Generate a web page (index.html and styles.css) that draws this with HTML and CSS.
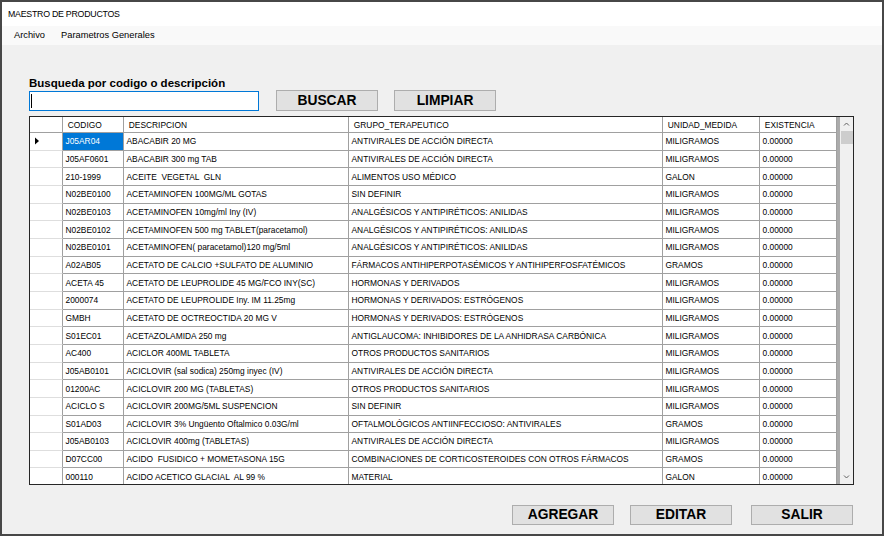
FILE: index.html
```html
<!DOCTYPE html>
<html lang="es">
<head>
<meta charset="utf-8">
<title>MAESTRO DE PRODUCTOS</title>
<link rel="stylesheet" href="styles.css">
</head>
<body>
<div class="window">
  <div class="titlebar">MAESTRO DE PRODUCTOS</div>
  <div class="menubar"><span>Archivo</span><span>Parametros Generales</span></div>
  <div class="main">
    <div class="search-label">Busqueda por codigo o descripción</div>
    <div class="search-row">
      <div class="textbox"><span class="caret"></span></div>
      <button class="btn btn-buscar">BUSCAR</button>
      <button class="btn btn-limpiar">LIMPIAR</button>
    </div>
    <div class="grid">
      <div class="table">
        <div class="row head">
          <div class="c0"></div><div class="c1">CODIGO</div><div class="c2">DESCRIPCION</div><div class="c3">GRUPO_TERAPEUTICO</div><div class="c4">UNIDAD_MEDIDA</div><div class="c5">EXISTENCIA</div>
        </div>
        <div class="row"><div class="c0"><svg class="arrow" width="5" height="8" viewBox="0 0 5 8"><polygon points="0,0.5 4,4 0,7.5" fill="#000"/></svg></div><div class="c1 sel">J05AR04</div><div class="c2">ABACABIR 20 MG</div><div class="c3">ANTIVIRALES DE ACCIÓN DIRECTA</div><div class="c4">MILIGRAMOS</div><div class="c5">0.00000</div></div>
        <div class="row"><div class="c0"></div><div class="c1">J05AF0601</div><div class="c2">ABACABIR 300 mg TAB</div><div class="c3">ANTIVIRALES DE ACCIÓN DIRECTA</div><div class="c4">MILIGRAMOS</div><div class="c5">0.00000</div></div>
        <div class="row"><div class="c0"></div><div class="c1">210-1999</div><div class="c2">ACEITE  VEGETAL  GLN</div><div class="c3">ALIMENTOS USO MÉDICO</div><div class="c4">GALON</div><div class="c5">0.00000</div></div>
        <div class="row"><div class="c0"></div><div class="c1">N02BE0100</div><div class="c2">ACETAMINOFEN 100MG/ML GOTAS</div><div class="c3">SIN DEFINIR</div><div class="c4">MILIGRAMOS</div><div class="c5">0.00000</div></div>
        <div class="row"><div class="c0"></div><div class="c1">N02BE0103</div><div class="c2">ACETAMINOFEN 10mg/ml Iny (IV)</div><div class="c3">ANALGÉSICOS Y ANTIPIRÉTICOS: ANILIDAS</div><div class="c4">MILIGRAMOS</div><div class="c5">0.00000</div></div>
        <div class="row"><div class="c0"></div><div class="c1">N02BE0102</div><div class="c2">ACETAMINOFEN 500 mg TABLET(paracetamol)</div><div class="c3">ANALGÉSICOS Y ANTIPIRÉTICOS: ANILIDAS</div><div class="c4">MILIGRAMOS</div><div class="c5">0.00000</div></div>
        <div class="row"><div class="c0"></div><div class="c1">N02BE0101</div><div class="c2">ACETAMINOFEN( paracetamol)120 mg/5ml</div><div class="c3">ANALGÉSICOS Y ANTIPIRÉTICOS: ANILIDAS</div><div class="c4">MILIGRAMOS</div><div class="c5">0.00000</div></div>
        <div class="row"><div class="c0"></div><div class="c1">A02AB05</div><div class="c2">ACETATO DE CALCIO +SULFATO DE ALUMINIO</div><div class="c3">FÁRMACOS ANTIHIPERPOTASÉMICOS Y ANTIHIPERFOSFATÉMICOS</div><div class="c4">GRAMOS</div><div class="c5">0.00000</div></div>
        <div class="row"><div class="c0"></div><div class="c1">ACETA 45</div><div class="c2">ACETATO DE LEUPROLIDE 45 MG/FCO INY(SC)</div><div class="c3">HORMONAS Y DERIVADOS</div><div class="c4">MILIGRAMOS</div><div class="c5">0.00000</div></div>
        <div class="row"><div class="c0"></div><div class="c1">2000074</div><div class="c2">ACETATO DE LEUPROLIDE Iny. IM 11.25mg</div><div class="c3">HORMONAS Y DERIVADOS: ESTRÓGENOS</div><div class="c4">MILIGRAMOS</div><div class="c5">0.00000</div></div>
        <div class="row"><div class="c0"></div><div class="c1">GMBH</div><div class="c2">ACETATO DE OCTREOCTIDA 20 MG V</div><div class="c3">HORMONAS Y DERIVADOS: ESTRÓGENOS</div><div class="c4">MILIGRAMOS</div><div class="c5">0.00000</div></div>
        <div class="row"><div class="c0"></div><div class="c1">S01EC01</div><div class="c2">ACETAZOLAMIDA 250 mg</div><div class="c3">ANTIGLAUCOMA: INHIBIDORES DE LA ANHIDRASA CARBÓNICA</div><div class="c4">MILIGRAMOS</div><div class="c5">0.00000</div></div>
        <div class="row"><div class="c0"></div><div class="c1">AC400</div><div class="c2">ACICLOR 400ML TABLETA</div><div class="c3">OTROS PRODUCTOS SANITARIOS</div><div class="c4">MILIGRAMOS</div><div class="c5">0.00000</div></div>
        <div class="row"><div class="c0"></div><div class="c1">J05AB0101</div><div class="c2">ACICLOVIR (sal sodica) 250mg inyec (IV)</div><div class="c3">ANTIVIRALES DE ACCIÓN DIRECTA</div><div class="c4">MILIGRAMOS</div><div class="c5">0.00000</div></div>
        <div class="row"><div class="c0"></div><div class="c1">01200AC</div><div class="c2">ACICLOVIR 200 MG (TABLETAS)</div><div class="c3">OTROS PRODUCTOS SANITARIOS</div><div class="c4">MILIGRAMOS</div><div class="c5">0.00000</div></div>
        <div class="row"><div class="c0"></div><div class="c1">ACICLO S</div><div class="c2">ACICLOVIR 200MG/5ML SUSPENCION</div><div class="c3">SIN DEFINIR</div><div class="c4">MILIGRAMOS</div><div class="c5">0.00000</div></div>
        <div class="row"><div class="c0"></div><div class="c1">S01AD03</div><div class="c2">ACICLOVIR 3% Ungüento Oftalmico 0.03G/ml</div><div class="c3">OFTALMOLÓGICOS ANTIINFECCIOSO: ANTIVIRALES</div><div class="c4">GRAMOS</div><div class="c5">0.00000</div></div>
        <div class="row"><div class="c0"></div><div class="c1">J05AB0103</div><div class="c2">ACICLOVIR 400mg (TABLETAS)</div><div class="c3">ANTIVIRALES DE ACCIÓN DIRECTA</div><div class="c4">MILIGRAMOS</div><div class="c5">0.00000</div></div>
        <div class="row"><div class="c0"></div><div class="c1">D07CC00</div><div class="c2">ACIDO  FUSIDICO + MOMETASONA 15G</div><div class="c3">COMBINACIONES DE CORTICOSTEROIDES CON OTROS FÁRMACOS</div><div class="c4">GRAMOS</div><div class="c5">0.00000</div></div>
        <div class="row"><div class="c0"></div><div class="c1">000110</div><div class="c2">ACIDO ACETICO GLACIAL  AL 99 %</div><div class="c3">MATERIAL</div><div class="c4">GALON</div><div class="c5">0.00000</div></div>
      </div>
      <div class="band"></div>
      <div class="vscroll">
        <div class="sb-btn"><svg width="7" height="4" viewBox="0 0 7 4"><path d="M1 3.5 L3.5 1 L6 3.5" stroke="#606060" stroke-width="1" fill="none"/></svg></div>
        <div class="sb-thumb"></div>
        <div class="sb-track"></div>
        <div class="sb-btn"><svg width="7" height="4" viewBox="0 0 7 4"><path d="M1 0.5 L3.5 3 L6 0.5" stroke="#606060" stroke-width="1" fill="none"/></svg></div>
      </div>
    </div>
    <div class="footer">
      <button class="btn">AGREGAR</button>
      <button class="btn btn-editar">EDITAR</button>
      <button class="btn btn-salir">SALIR</button>
    </div>
  </div>
</div>
</body>
</html>
```
FILE: styles.css
```css
* { box-sizing: border-box; }
html, body { margin: 0; padding: 0; }
body {
  width: 884px;
  height: 536px;
  overflow: hidden;
  background: #f0f0f0;
  font-family: "Liberation Sans", Arial, sans-serif;
  color: #000;
}
.window {
  width: 884px;
  height: 536px;
  border: 2px solid #474747;
  background: #f0f0f0;
  display: flex;
  flex-direction: column;
}
.titlebar {
  height: 24px;
  flex: none;
  background: #fff;
  padding-left: 6px;
  font-size: 8.8px;
  letter-spacing: -0.25px;
  line-height: 24px;
}
.menubar {
  height: 19px;
  flex: none;
  background: #f9f9f9;
  display: flex;
  align-items: center;
  gap: 16px;
  padding-left: 12px;
  font-size: 9.3px;
  line-height: 19px;
}
.main {
  padding: 31px 28px 0 27px;
  display: flex;
  flex-direction: column;
}
.search-label {
  height: 14px;
  font-size: 11.5px;
  font-weight: bold;
  line-height: 14px;
}
.search-row {
  display: flex;
  align-items: flex-start;
  height: 21px;
}
.textbox {
  width: 230px;
  height: 20px;
  margin-top: 1px;
  background: #fff;
  border: 1px solid #0078d7;
  padding: 2px 0 0 1px;
}
.caret {
  display: block;
  width: 1px;
  height: 14px;
  background: #000;
}
.btn {
  width: 102px;
  height: 20px;
  padding: 0;
  margin: 0;
  background: #e1e1e1;
  border: 1px solid #adadad;
  font-family: "Liberation Sans", Arial, sans-serif;
  font-weight: bold;
  font-size: 13.8px;
  line-height: 18px;
  color: #000;
  text-align: center;
}
.btn-buscar { margin-left: 17px; height: 21px; }
.btn-limpiar { margin-left: 16px; height: 21px; }

.grid {
  margin-top: 5px;
  width: 825px;
  height: 369px;
  border: 1px solid #262626;
  background: #fff;
  display: flex;
  flex: none;
}
.table {
  width: 807px;
  height: 367px;
  overflow: hidden;
  display: flex;
  flex-direction: column;
  font-size: 8.4px;
}
.row {
  display: flex;
  flex: none;
  height: 17.67px;
}
.row.head { height: 16px; }
.row > div {
  border-right: 1px solid #a0a0a0;
  border-bottom: 1px solid #a0a0a0;
  white-space: pre;
  overflow: hidden;
  padding-left: 2.5px;
  display: flex;
  align-items: center;
}
.row.head > div { padding-left: 4.8px; }
.row > .c0 { border-bottom-color: #dedede; padding-left: 5px; }
.row.head > .c0 { border-bottom-color: #a0a0a0; }
.c0 { width: 33px; }
.c1 { width: 61px; }
.c2 { width: 225px; }
.c3 { width: 314px; }
.c4 { width: 97px; }
.c5 { width: 77px; }
.row > .sel { background: #0078d7; color: #fff; }
.arrow { display: block; }

.band {
  width: 3px;
  flex: none;
  background: #ababab;
}
.vscroll {
  width: 13px;
  flex: none;
  background: #f0f0f0;
  display: flex;
  flex-direction: column;
}
.sb-btn {
  height: 13.7px;
  flex: none;
  display: flex;
  align-items: center;
  justify-content: center;
}
.sb-thumb {
  height: 13.3px;
  flex: none;
  margin-left: 1px;
  background: #cdcdcd;
}
.sb-track { flex: 1; }

.footer {
  margin-top: 20px;
  display: flex;
  justify-content: flex-end;
  padding-right: 1px;
}
.btn-editar { margin-left: 16px; }
.btn-salir { margin-left: 19px; }
```
